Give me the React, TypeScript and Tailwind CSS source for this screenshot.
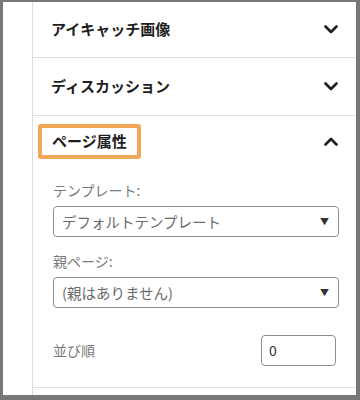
import React from 'react';

const ChevronDown = () => (
  <svg width="14" height="9" viewBox="0 0 14 9" fill="none">
    <path d="M1.5 1.5 L7 7 L12.5 1.5" stroke="#1e1e1e" strokeWidth="2.6" strokeLinecap="round" strokeLinejoin="round" />
  </svg>
);

const ChevronUp = () => (
  <svg width="14" height="9" viewBox="0 0 14 9" fill="none">
    <path d="M1.5 7.5 L7 2 L12.5 7.5" stroke="#1e1e1e" strokeWidth="2.6" strokeLinecap="round" strokeLinejoin="round" />
  </svg>
);

const SelectBox = ({ label }: { label: string }) => (
  <div className="h-[31px] w-[286px] border border-[#8c8f94] rounded-[4px] flex items-center justify-between pl-[8px] pr-[9px] bg-white">
    <span className="text-[14.5px] text-[#6a6a6a]">{label}</span>
    <span className="text-[9px] text-[#2c3338]">▼</span>
  </div>
);

const App = () => {
  return (
    <div
      className="w-[360px] h-[400px] bg-white border-t-2 border-l-[3px] border-r-4 border-b-[5px] border-[#777777] flex"
      style={{ fontFamily: '"Noto Sans CJK JP", "Noto Sans", sans-serif' }}
    >
      {/* gutter */}
      <div className="w-[29px] shrink-0" />

      {/* panel */}
      <div className="flex-1 border-l border-[#dcdcde] flex flex-col">
        <div className="h-[56px] border-b border-[#e0e0e0] flex items-center justify-between pl-[18px] pr-[18px]">
          <span className="text-[15px] font-bold text-[#1e1e1e]">アイキャッチ画像</span>
          <ChevronDown />
        </div>
        <div className="h-[58px] border-b border-[#e0e0e0] flex items-center justify-between pl-[18px] pr-[18px]">
          <span className="text-[15px] font-bold text-[#1e1e1e]">ディスカッション</span>
          <ChevronDown />
        </div>

        {/* page attributes */}
        <div className="h-[272px] border-b border-[#e0e0e0] pt-[8px]">
          <div className="flex items-center justify-between pl-[5px] pr-[18px]">
            <div className="h-[35px] border-4 border-[#f0a757] rounded-[3px] flex items-center pl-[10px] pr-[10px]">
              <span className="text-[15px] font-bold text-[#1e1e1e]">ページ属性</span>
            </div>
            <ChevronUp />
          </div>

          <div className="pl-[20px] pt-[21px]">
            <div className="h-[20px] text-[14px] leading-[20px] text-[#7a7a7a]">テンプレート:</div>
            <div className="mt-[6px]">
              <SelectBox label="デフォルトテンプレート" />
            </div>

            <div className="mt-[14px] h-[20px] text-[14px] leading-[20px] text-[#7a7a7a]">親ページ:</div>
            <div className="mt-[6px]">
              <SelectBox label="(親はありません)" />
            </div>

            <div className="mt-[27px] flex items-center justify-between pr-[20px]">
              <span className="text-[14px] text-[#7a7a7a]">並び順</span>
              <div className="w-[75px] h-[31px] border border-[#8c8f94] rounded-[4px] flex items-center pl-[7px] text-[14px] text-[#2c3338]">
                0
              </div>
            </div>
          </div>
        </div>
      </div>
    </div>
  );
};

export default App;
